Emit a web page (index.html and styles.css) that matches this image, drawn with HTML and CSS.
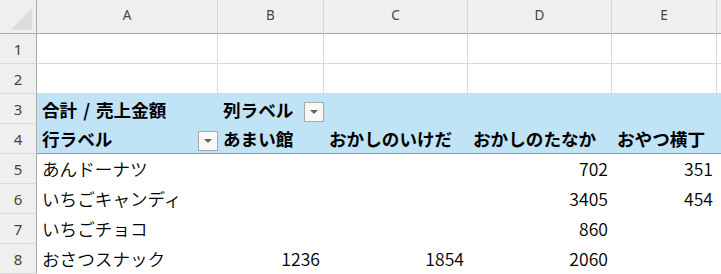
FILE: index.html
```html
<!DOCTYPE html>
<html lang="ja">
<head>
<meta charset="utf-8">
<link rel="stylesheet" href="styles.css">
</head>
<body>
<div class="sheet">
  <div class="corner"><svg class="tri" width="37" height="34" viewBox="0 0 37 34"><polygon points="11,30 33,30 33,8" fill="#DCDCDC"/></svg></div>
  <div class="ch">A</div><div class="ch">B</div><div class="ch">C</div><div class="ch">D</div><div class="ch">E</div><div class="ch last"></div>

  <div class="rh">1</div>
  <div class="c"></div><div class="c"></div><div class="c"></div><div class="c"></div><div class="c"></div><div class="c"></div>

  <div class="rh">2</div>
  <div class="c"></div><div class="c"></div><div class="c"></div><div class="c"></div><div class="c"></div><div class="c"></div>

  <div class="rh">3</div>
  <div class="b bold spaced">合計 / 売上金額</div>
  <div class="b bold">列ラベル<span class="dd"><i></i></span></div>
  <div class="b"></div><div class="b"></div><div class="b"></div><div class="b"></div>

  <div class="rh">4</div>
  <div class="b b4 bold">行ラベル<span class="dd"><i></i></span></div>
  <div class="b b4 bold">あまい館</div>
  <div class="b b4 bold">おかしのいけだ</div>
  <div class="b b4 bold">おかしのたなか</div>
  <div class="b b4 bold">おやつ横丁</div>
  <div class="b b4"></div>

  <div class="rh">5</div>
  <div class="w">あんドーナツ</div><div class="w num"></div><div class="w num"></div><div class="w num">702</div><div class="w num">351</div><div class="w"></div>

  <div class="rh">6</div>
  <div class="w">いちごキャンディ</div><div class="w num"></div><div class="w num"></div><div class="w num">3405</div><div class="w num">454</div><div class="w"></div>

  <div class="rh">7</div>
  <div class="w">いちごチョコ</div><div class="w num"></div><div class="w num"></div><div class="w num">860</div><div class="w num"></div><div class="w"></div>

  <div class="rh">8</div>
  <div class="w">おさつスナック</div><div class="w num">1236</div><div class="w num">1854</div><div class="w num">2060</div><div class="w num"></div><div class="w"></div>
</div>
</body>
</html>
```
FILE: styles.css
```css
html, body {
  margin: 0;
  padding: 0;
  background: #ffffff;
}
.sheet {
  width: 721px;
  height: 274px;
  overflow: hidden;
  display: grid;
  grid-template-columns: 37px 181px 106px 144px 144px 105px 1fr;
  grid-template-rows: 34px repeat(8, 30px);
  font-family: "Noto Sans CJK JP", "Noto Sans", sans-serif;
  color: #000;
}
.sheet > div {
  box-sizing: border-box;
  min-width: 0;
  white-space: nowrap;
  overflow: hidden;
}
.corner {
  background: #efefef;
  border-right: 1px solid #ababab;
  border-bottom: 1px solid #ababab;
  display: flex;
}
.tri { display: block; }
.ch {
  background: #efefef;
  border-right: 1px solid #d6d6d6;
  border-bottom: 1px solid #ababab;
  display: flex;
  align-items: center;
  justify-content: center;
  padding-bottom: 4px;
  font-size: 13.5px;
  color: #444;
  font-family: "Noto Sans", sans-serif;
}
.rh {
  background: #efefef;
  border-right: 1px solid #ababab;
  border-bottom: 1px solid #dadada;
  display: flex;
  align-items: center;
  justify-content: center;
  font-size: 15px;
  color: #444;
  font-family: "Noto Sans", sans-serif;
}
.c {
  border-right: 1px solid #dadada;
  border-bottom: 1px solid #dadada;
}
.b, .w {
  display: flex;
  align-items: center;
  padding: 0 4px 0 5px;
  font-size: 17.6px;
}
.w {
  font-weight: 350;
  padding-bottom: 2px;
}
.b {
  background: #c0e3f5;
}
.b4 {
  border-bottom: 1px solid #5fa8dc;
}
.bold {
  font-weight: bold;
}
.spaced {
  word-spacing: 2px;
}
.num {
  justify-content: flex-end;
}
.dd {
  margin-left: auto;
  margin-right: -4px;
  align-self: flex-end;
  margin-bottom: 2px;
  width: 20px;
  height: 20px;
  box-sizing: border-box;
  border: 1px solid #a8a8a8;
  background: #f8f8f8;
  display: flex;
  align-items: center;
  justify-content: center;
}
.dd i {
  display: block;
  width: 0;
  height: 0;
  border-left: 4px solid transparent;
  border-right: 4px solid transparent;
  border-top: 4px solid #606060;
}
```
